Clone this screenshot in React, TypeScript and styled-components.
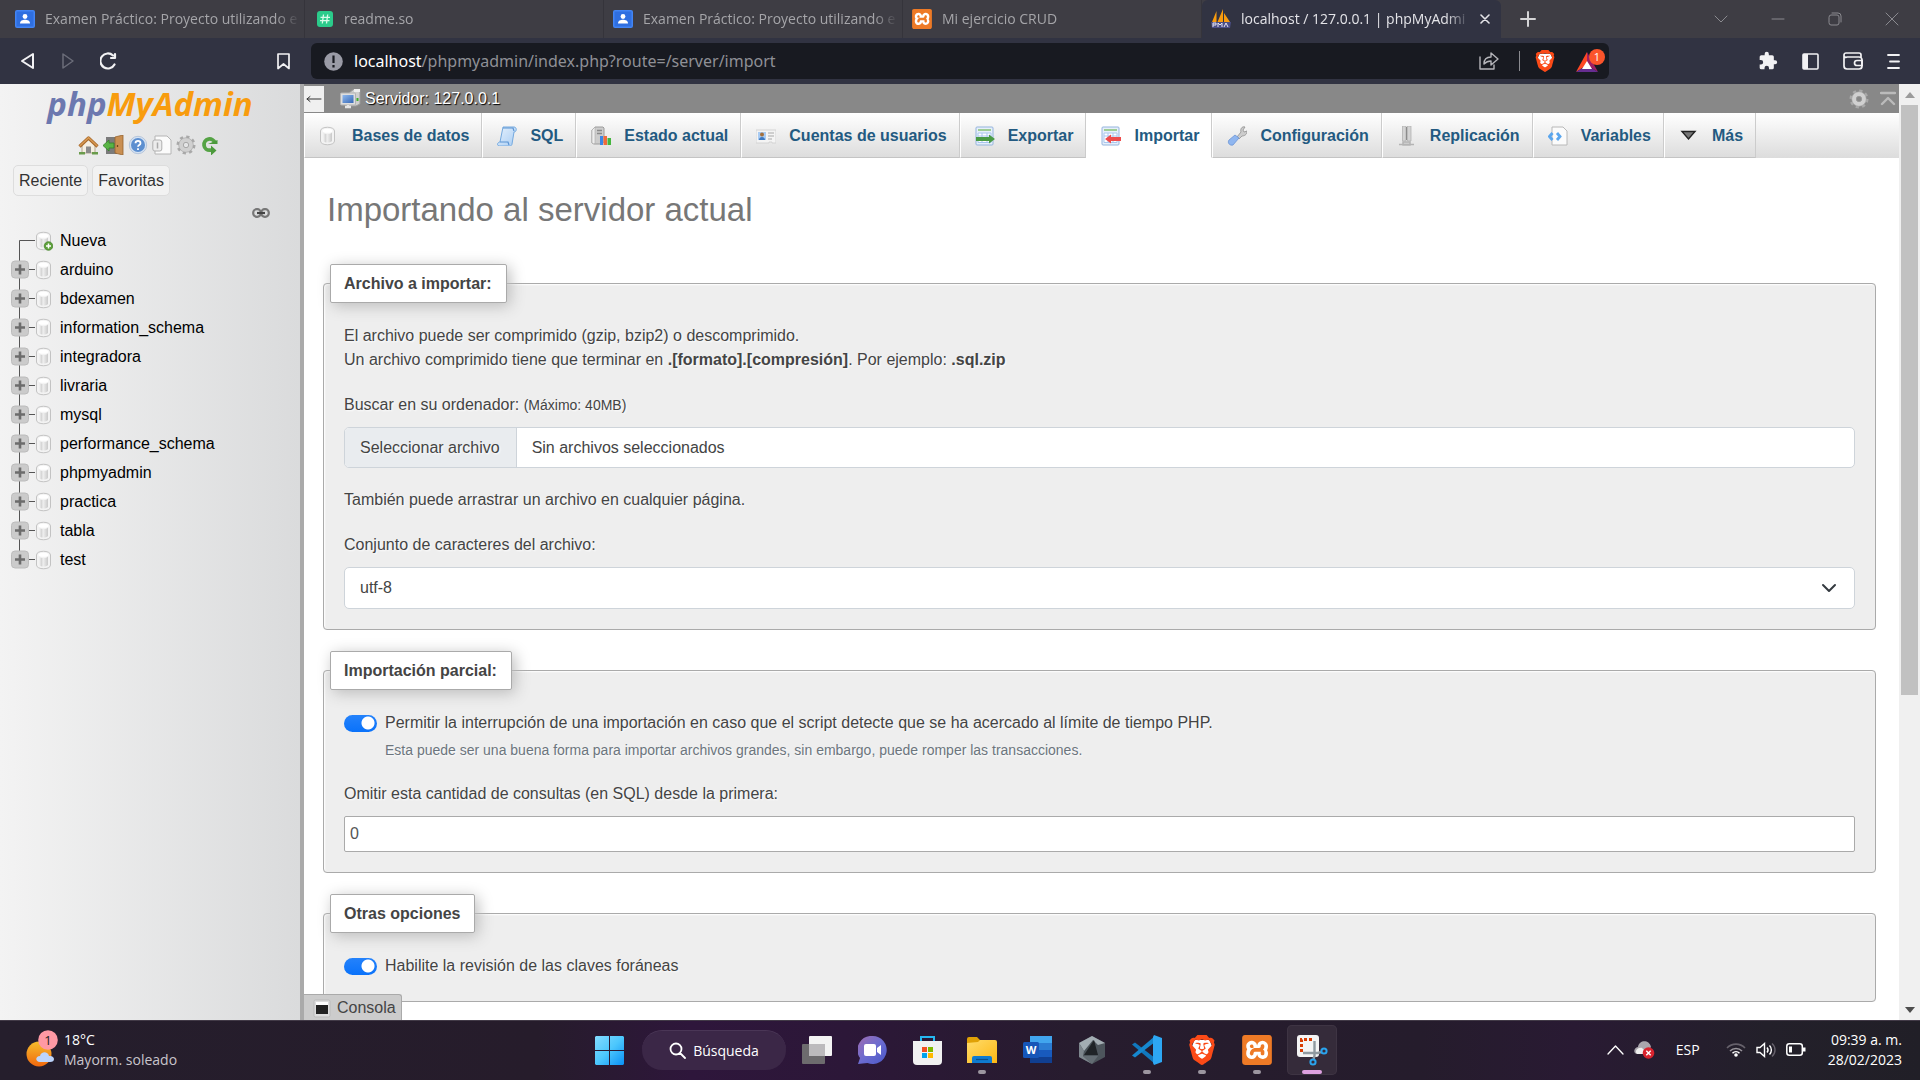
import React from "react";
import styled, { createGlobalStyle, css } from "styled-components";
import { SiBrave, SiXampp } from "react-icons/si";

const UI = `"Open Sans", "Noto Sans", sans-serif`;
const PAGE = `"Liberation Sans", Arial, sans-serif`;

const GlobalStyle = createGlobalStyle`
  *, *::before, *::after { box-sizing: border-box; }
  body { margin: 0; font-family: ${PAGE}; font-size: 16px; line-height: 24px; color: #444; background: #fff; }
  button, input, select { font: inherit; color: inherit; }
  button { margin: 0; padding: 0; border: 0; background: none; }
  a { color: inherit; text-decoration: none; }
  svg { display: block; flex: none; }
`;

const Desktop = styled.div`
  display: flex;
  flex-direction: column;
  height: 100vh;
  overflow: hidden;
`;

/* ---------- browser chrome ---------- */

const TabStrip = styled.div`
  display: flex;
  align-items: stretch;
  height: 38px;
  flex: none;
  background: #3e3d44;
  font-family: ${UI};
  font-size: 14px;
  color: #a5a5a9;
`;

const BrowserTab = styled.a<{ $active?: boolean; $first?: boolean }>`
  display: flex;
  align-items: center;
  gap: 10px;
  flex: 0 1 ${(p) => (p.$first ? 305 : 299)}px;
  min-width: 0;
  padding: 0 ${(p) => (p.$active ? 10 : 4)}px 0 ${(p) => (p.$first ? 15 : 9)}px;
  border-right: 1px solid ${(p) => (p.$active ? "transparent" : "#35343b")};
  ${(p) =>
    p.$active &&
    css`
      background: #313342;
      color: #e4e4e8;
      border-radius: 6px 6px 0 0;
      font-weight: 500;
    `}
`;

const TabTitle = styled.span`
  flex: 1;
  overflow: hidden;
  white-space: nowrap;
  mask-image: linear-gradient(90deg, #000 calc(100% - 24px), transparent);
`;

const NewTab = styled.button`
  display: grid;
  place-items: center;
  width: 54px;
`;

const WindowControls = styled.div`
  display: flex;
  align-items: center;
  gap: 43px;
  margin-left: auto;
  padding-right: 21px;
  color: #8b8b90;
`;

const AddressRow = styled.div`
  display: flex;
  align-items: center;
  height: 46px;
  flex: none;
  padding: 0 20px;
  background: #313342;
  color: #f2f2f4;
`;

const NavButtons = styled.div`
  display: flex;
  align-items: center;
  gap: 24px;
  width: 257px;
  flex: none;
`;

const AddressBar = styled.div`
  display: flex;
  align-items: center;
  gap: 11px;
  height: 36px;
  flex: 0 1 1298px;
  min-width: 0;
  margin-left: 21px;
  padding: 0 3px 0 13px;
  border-radius: 6px;
  background: #181a21;
`;

const Url = styled.div`
  flex: 1;
  min-width: 0;
  font-family: "Noto Sans", "Open Sans", sans-serif;
  font-size: 16px;
  color: #8f9096;
  white-space: nowrap;
  overflow: hidden;
  b { color: #fff; font-weight: 400; }
`;

const AddressActions = styled.div`
  display: flex;
  align-items: center;
  gap: 20px;
`;

const Divider = styled.span`
  width: 1px;
  height: 20px;
  margin-right: -5px;
  background: #8a8b90;
`;

const ToolbarActions = styled.div`
  display: flex;
  align-items: center;
  gap: 24px;
  margin-left: auto;
`;

/* ---------- phpMyAdmin ---------- */

const Page = styled.div`
  display: flex;
  flex: 1;
  min-height: 0;
`;

const Sidebar = styled.aside`
  display: flex;
  flex-direction: column;
  width: 304px;
  flex: none;
  border-right: 4px solid #aaa;
  background: linear-gradient(90deg, #f3f3f3, #dadbdc);
  color: #000;
`;

const Logo = styled.a`
  align-self: center;
  height: 44px;
  font-family: ${UI};
  font-size: 33px;
  font-style: italic;
  font-weight: 700;
  line-height: 40px;
  color: #f89c0e;
  span { color: #6c78af; }
`;

const SideIcons = styled.div`
  display: flex;
  justify-content: center;
  gap: 4px;
  height: 23px;
  margin-top: 7px;
  padding-right: 2px;
`;

const SideTabs = styled.div`
  display: flex;
  gap: 4px;
  margin-top: 7px;
  padding-left: 13px;
`;

const SideTab = styled.button`
  height: 31px;
  padding: 0 5px;
  border: 1px solid #ddd;
  border-radius: 5px;
  background: #f2f2f2;
  color: #333;
`;

const LinkRow = styled.div`
  display: flex;
  justify-content: flex-end;
  height: 31px;
  padding: 12px 30px 0 0;
`;

const Tree = styled.ul`
  margin: 0;
  padding: 0 0 0 11px;
  list-style: none;
`;

const TreeItem = styled.li`
  display: flex;
  align-items: center;
  height: 29px;
  &:first-child { height: 28px; }
`;

const TreeLink = styled.a`
  margin-left: 7px;
`;

const Main = styled.div`
  position: relative;
  display: flex;
  flex-direction: column;
  flex: 1;
  min-width: 0;
  overflow: hidden;
  background: #fff;
`;

const ServerBar = styled.div`
  display: flex;
  align-items: center;
  height: 29px;
  flex: none;
  padding-right: 3px;
  background: #888;
  color: #fff;
  text-shadow: 1px 1px 1px #000;
`;

const CollapseButton = styled.button`
  width: 20px;
  height: 26px;
  margin-right: 16px;
  background: #f0f0f0;
  color: #333;
  display: grid;
  place-items: center;
`;

const ServerLink = styled.a`
  display: flex;
  align-items: center;
  gap: 4px;
`;

const ServerTools = styled.div`
  display: flex;
  align-items: center;
  gap: 11px;
  margin-left: auto;
`;

const Menu = styled.nav`
  display: flex;
  height: 45px;
  flex: none;
  background: linear-gradient(#fff, #dcdcdc);
`;

const MenuTab = styled.a<{ $active?: boolean }>`
  display: flex;
  align-items: center;
  gap: 13px;
  padding: 1px 12px 0 14px;
  border-left: 1px solid #fff;
  border-right: 1px solid #ccc;
  border-bottom: 1px solid #c4c4c4;
  font-weight: 700;
  color: #235a81;
  white-space: nowrap;
  ${(p) =>
    p.$active &&
    css`
      background: #fff;
      border-bottom-color: #fff;
    `}
`;

const Content = styled.form`
  padding: 0 23px 0 19px;
`;

const Title = styled.h1`
  margin: 33px 0 35px 4px;
  font-size: 33px;
  font-weight: 400;
  line-height: 38px;
  color: #777;
`;

const Group = styled.fieldset`
  min-width: 0;
  margin: 0 0 21px;
  padding: 0;
  border: 1px solid #aaa;
  border-radius: 4px;
  background: #eee;
  box-shadow: 1px 1px 2px #fff inset;
  text-shadow: 1px 1px 2px #fff;
`;

const Legend = styled.legend`
  height: 39px;
  margin-left: 6px;
  padding: 0 14px 0 13px;
  border: 1px solid #aaa;
  border-radius: 2px;
  background: #fff;
  box-shadow: 3px 3px 15px #bbb;
  font-weight: 700;
  line-height: 37px;
`;

const GroupBody = styled.div`
  display: flex;
  flex-direction: column;
  padding: 21px 20px 20px;
`;

const Paragraph = styled.p`
  margin: 0 0 21px;
`;

const FieldLabel = styled.label`
  margin-bottom: 10px;
  small { font-size: 14px; }
`;

const FilePicker = styled.label`
  display: flex;
  height: 41px;
  margin-bottom: 20px;
  border: 1px solid #ced4da;
  border-radius: 5px;
  background: #fff;
  line-height: 39px;
  overflow: hidden;
  input { width: 0; height: 0; margin: 0; opacity: 0; }
`;

const FileButton = styled.span`
  padding: 0 16px 0 15px;
  border-right: 1px solid #ced4da;
  background: #e9ecef;
`;

const FileName = styled.span`
  padding: 0 15px;
`;

const SelectBox = styled.div`
  display: grid;
  align-items: center;
  > * { grid-area: 1 / 1; }
  > svg { justify-self: end; margin-right: 18px; pointer-events: none; }
`;

const Select = styled.select`
  appearance: none;
  width: 100%;
  height: 42px;
  padding: 0 15px;
  border: 1px solid #ced4da;
  border-radius: 5px;
  background: #fff;
`;

const SwitchRow = styled.div`
  display: flex;
  align-items: center;
  gap: 8px;
  height: 24px;
  &:last-child { margin-bottom: 3px; }
`;

const Switch = styled.input`
  appearance: none;
  width: 33px;
  height: 17px;
  margin: 0;
  border-radius: 9px;
  background: radial-gradient(circle at 24px 8px, #fff 6px, transparent 7px), linear-gradient(#2482fb, #0a72fa);
`;

const Hint = styled.div`
  margin: 4px 0 21px 41px;
  font-size: 14px;
  line-height: 22px;
  color: #6c757d;
`;

const NumberInput = styled.input`
  width: 100%;
  height: 36px;
  padding: 0 5px;
  border: 1px solid #aaa;
  border-radius: 2px;
  background: #fff;
  color: #555;
`;

const ConsoleTab = styled.button`
  position: absolute;
  left: 0;
  bottom: 0;
  display: flex;
  align-items: center;
  gap: 6px;
  height: 26px;
  padding: 1px 5px 0 9px;
  border: 1px solid #aaa;
  border-width: 1px 1px 0 0;
  border-radius: 0 3px 0 0;
  background: #ccc;
  color: #444;
`;

const ScrollBar = styled.div`
  display: flex;
  flex-direction: column;
  align-items: center;
  width: 21px;
  flex: none;
  background: #f0f0f0;
`;

const ScrollArrow = styled.button`
  display: grid;
  place-items: center;
  height: 21px;
`;

const ScrollTrack = styled.div`
  flex: 1;
  width: 17px;
`;

const ScrollThumb = styled.div`
  height: 66%;
  background: #c1c1c1;
`;

/* ---------- taskbar ---------- */

const TaskBar = styled.footer`
  display: grid;
  grid-template-columns: 1fr auto 1fr;
  align-items: center;
  height: 60px;
  flex: none;
  border-top: 1px solid #423a47;
  background: linear-gradient(90deg, #251e2c 0%, #261c2b 28%, #2e163b 36%, #2c1738 44%, #271c2e 56%, #251c2c 74%, #291a33 82%, #23202a 92%, #211f27 100%);
  color: #fff;
  font-family: ${UI};
  font-size: 14px;
  line-height: 20px;
`;

const Weather = styled.button`
  display: flex;
  align-items: center;
  gap: 6px;
  justify-self: start;
  padding: 0 0 2px 26px;
  text-align: left;
  span { display: block; }
  span + span { color: #c9c5cc; }
`;

const Apps = styled.div`
  display: flex;
  align-items: center;
  gap: 5px;
  padding: 0 0 1px 1px;
`;

const AppButton = styled.button<{ $active?: boolean }>`
  position: relative;
  display: grid;
  place-items: center;
  width: 50px;
  height: 50px;
  border-radius: 5px;
  ${(p) =>
    p.$active &&
    css`
      background: #352b3a;
      box-shadow: inset 0 0 0 1px #3e3443;
    `}
`;

const Running = styled.i<{ $active?: boolean }>`
  position: absolute;
  bottom: 1px;
  left: 50%;
  width: ${(p) => (p.$active ? 20 : 8)}px;
  height: 4px;
  margin-left: ${(p) => (p.$active ? -10 : -4)}px;
  border-radius: 2px;
  background: ${(p) => (p.$active ? "#dda0e0" : "#9c96a0")};
`;

const Search = styled.button`
  display: flex;
  align-items: center;
  justify-content: center;
  gap: 7px;
  width: 144px;
  height: 40px;
  margin: 0 1px 0 3px;
  border-radius: 20px;
  border-top: 1px solid #4a3656;
  background: #3b2747;
`;

const Tray = styled.div`
  display: flex;
  align-items: center;
  justify-self: end;
  gap: 10px;
  padding: 0 18px 2px 0;
`;

const Language = styled.button`
  margin: 0 16px 0 11px;
  font-size: 14px;
`;

const Clock = styled.time`
  margin-left: 12px;
  text-align: right;
`;

/* ---------- drawings ---------- */

const Classroom = () => (
  <svg width="20" height="18" viewBox="0 0 20 18">
    <rect width="20" height="18" rx="2" fill="#4285f4" />
    <rect x="1.5" y="1.5" width="17" height="15" fill="#2f6fe0" />
    <circle cx="10" cy="6.5" r="2.4" fill="#fff" />
    <path d="M5 13.500c0-3 2.500-3.800 5-3.800s5 .8 5 3.800z" fill="#fff" />
  </svg>
);

const ReadmeIcon = () => (
  <svg width="20" height="16" viewBox="-3 0 20 16">
    <rect width="16" height="16" rx="3" fill="#2bcb8b" />
    <path d="M6.500 3.500 5.300 12.500M10.700 3.500 9.500 12.500M3.500 6.300h9.500M3 9.700h9.500" stroke="#d8fbe9" strokeWidth="1.300" />
  </svg>
);

const Xampp = ({ size }: { size: number }) => (
  <svg width={size} height={size} viewBox="0 0 24 24">
    <rect x="2" y="2" width="20" height="20" fill="#fff" />
    <SiXampp size={24} color="#ee7a26" />
  </svg>
);

const PmaFavicon = () => (
  <svg width="20" height="20" viewBox="0 0 20 20">
    <path d="M5.500 2 1 13h4.500zM12 0 6.500 13H12zM13 4l6 9h-6z" fill="#f89c0e" />
    <path d="M0 13h20l-1 6H1z" fill="#4b4f86" />
    <path d="M2 18v-4h3v2H2M7 18v-4l2 2 2-2v4M13 18l2-4 2 4" fill="none" stroke="#e6e6f2" />
  </svg>
);

const line = (w: number, h: number, d: string, sw = 1.5, color = "currentColor") => (
  <svg width={w} height={h} viewBox={`0 0 ${w} ${h}`} fill="none" stroke={color} strokeWidth={sw} strokeLinecap="round" strokeLinejoin="round">
    <path d={d} />
  </svg>
);

const InfoIcon = () => (
  <svg width="19" height="19" viewBox="0 0 19 19">
    <circle cx="9.500" cy="9.500" r="9.300" fill="#9a9ba6" />
    <path d="M9.500 3.500v7.500M9.500 13v2.500" stroke="#181a21" strokeWidth="2.200" />
  </svg>
);

const BraveIcon = ({ w, h }: { w: number; h: number }) => (
  <svg width={w} height={h} viewBox="2 0 20 24">
    <path d="M6 4h12l2 5-4 9-4 3-4-3-4-9z" fill="#fff" />
    <SiBrave size={24} color="#fb4a17" />
  </svg>
);

const BatIcon = () => (
  <svg width="31" height="24" viewBox="0 0 31 24">
    <path d="M12 3 1 23 12 16z" fill="#ff4724" />
    <path d="M12 3 23 23 12 16z" fill="#9e1f63" />
    <path d="M1 23h22l-11-7z" fill="#662d91" />
    <path d="m12 12 5 8H7z" fill="#fff" />
    <circle cx="22" cy="8" r="8" fill="#fb542b" />
    <text x="22" y="12" textAnchor="middle" fontSize="11" fontFamily="Open Sans" fill="#fff">1</text>
  </svg>
);

const PuzzleIcon = () => (
  <svg width="20" height="20" viewBox="0 0 24 24" fill="currentColor">
    <path d="M20.500 11H19V7a2 2 0 0 0-2-2h-4V3.500a2.500 2.500 0 0 0-5 0V5H4a2 2 0 0 0-2 2v3.800h1.500a2.700 2.700 0 0 1 0 5.400H2V20a2 2 0 0 0 2 2h3.800v-1.500a2.700 2.700 0 0 1 5.400 0V22H17a2 2 0 0 0 2-2v-4h1.500a2.500 2.500 0 0 0 0-5z" />
  </svg>
);

const SidebarIcon = () => (
  <svg width="17" height="17" viewBox="0 0 17 17">
    <rect x="1" y="1" width="15" height="15" rx="1" fill="none" stroke="#f2f2f4" strokeWidth="1.600" />
    <path d="M1 1h5v15H1z" fill="#f2f2f4" />
  </svg>
);

const WalletIcon = () => (
  <svg width="20" height="18" viewBox="0 0 20 18" fill="none" stroke="#f2f2f4" strokeWidth="1.700">
    <path d="M1 4v10a3 3 0 0 0 3 3h12a3 3 0 0 0 3-3V8a3 3 0 0 0-3-3H4a2 2 0 0 1-3-2 2 2 0 0 1 2-2h13a2 2 0 0 1 2 2v3" />
    <path d="M19 8.500h-5a2.500 2.500 0 0 0 0 5h5z" />
  </svg>
);

const Gradients = () => (
  <svg width="0" height="0" style={{ position: "absolute" }} aria-hidden="true">
    <defs>
      <linearGradient id="silver"><stop offset="0" stopColor="#f4f4f4" /><stop offset=".3" stopColor="#d4d4d4" /><stop offset=".45" stopColor="#f0f0f0" /><stop offset="1" stopColor="#c9c9c9" /></linearGradient>
      <linearGradient id="sky" x1="0" y1="0" x2="1" y2="1"><stop offset="0" stopColor="#e6f1fd" /><stop offset="1" stopColor="#a9cdf3" /></linearGradient>
      <linearGradient id="screen" x1="0" y1="0" x2="1" y2="1"><stop offset="0" stopColor="#8fb8ee" /><stop offset="1" stopColor="#3768b5" /></linearGradient>
      <linearGradient id="win" x1="0" y1="0" x2="1" y2="1"><stop offset="0" stopColor="#84dcff" /><stop offset=".5" stopColor="#4cc7fd" /><stop offset="1" stopColor="#0a90f5" /></linearGradient>
      <linearGradient id="sun" x1="0" y1="0" x2="0" y2="1"><stop offset="0" stopColor="#f6bd2c" /><stop offset="1" stopColor="#f0680e" /></linearGradient>
      <linearGradient id="chat" x1="0" y1="0" x2="1" y2="1"><stop offset="0" stopColor="#a06cb0" /><stop offset=".5" stopColor="#6c6cd0" /><stop offset="1" stopColor="#4a58c8" /></linearGradient>
      <linearGradient id="folder" x1="0" y1="0" x2="1" y2="1"><stop offset="0" stopColor="#ffdc6b" /><stop offset="1" stopColor="#fdb713" /></linearGradient>
    </defs>
  </svg>
);

const cylinder = (
  <>
    <path d="M1.500 5c0-5 14-5 14 0v10c0 5-14 5-14 0z" fill="#f3f3f3" stroke="#c3c3c3" />
    <path d="M4 6.500c2 2 7 2 9 0V15c-2 2-7 2-9 0z" fill="url(#silver)" />
    <ellipse cx="8.500" cy="4.800" rx="5" ry="2" fill="#fff" />
  </>
);

const DbIcon = ({ plus }: { plus?: boolean }) => (
  <svg width="18" height="20" viewBox="0 0 18 20">
    {cylinder}
    {plus && (
      <>
        <circle cx="13.500" cy="15" r="4.300" fill="#5da03a" stroke="#3f7f25" strokeWidth=".7" />
        <path d="M13.500 12.500v5M11 15h5" stroke="#fff" strokeWidth="1.500" />
      </>
    )}
  </svg>
);

const Branch = ({ kind }: { kind: "first" | "node" | "last" }) => (
  <svg width="24" height="29" viewBox="0 0 24 29">
    <path d={kind === "first" ? "M8.500 29V13.500H24" : kind === "last" ? "M8.500 0V14.500H26" : "M8.500 0V29M8.500 14.500H26"} fill="none" stroke="#555" />
    {kind !== "first" && (
      <>
        <rect x=".5" y="6" width="17" height="17" rx="3.500" fill="#cbcbcb" stroke="#bcbcbc" />
        <path d="M9 9.500v10M4 14.500h10" stroke="#6c6c6c" strokeWidth="2.600" />
      </>
    )}
  </svg>
);

const Cog = () => (
  <svg width="20" height="20" viewBox="0 0 20 20">
    <circle cx="10" cy="10" r="8" fill="none" stroke="#a9a9a9" strokeWidth="3" strokeDasharray="3.140 3.140" />
    <circle cx="10" cy="10" r="5" fill="none" stroke="#d0d0d0" strokeWidth="4.500" />
    <circle cx="10" cy="10" r="7.300" fill="none" stroke="#a0a0a0" strokeWidth=".6" />
    <circle cx="10" cy="10" r="2.700" fill="none" stroke="#999" strokeWidth=".8" />
  </svg>
);

const HomeIcon = () => (
  <svg width="21" height="20" viewBox="0 0 21 20">
    <path d="M4 9.500V18h13V9.500L10.500 4z" fill="#f5efe2" stroke="#b3a68d" />
    <path d="M1.500 11.500 10.500 3l9 8.500" fill="none" stroke="#a86a2c" strokeWidth="3.200" strokeLinejoin="round" />
    <path d="M1.800 11 10.500 2.800l8.700 8.200" fill="none" stroke="#d99a52" strokeWidth="1.400" />
    <path d="M8 11.500h5V18H8z" fill="#8b8b8b" />
    <path d="M1 18.200h6M14 18.200h6" stroke="#6a9c4c" strokeWidth="2.400" />
  </svg>
);

const ExitIcon = () => (
  <svg width="21" height="20" viewBox="0 0 21 20">
    <path d="M3 2h11v17H3z" fill="#7b7b7b" />
    <path d="m12 2 8-2v20l-8-2z" fill="#c98f52" stroke="#95632f" strokeWidth=".8" />
    <path d="M14.500 10v2" stroke="#6b451c" strokeWidth="1.300" />
    <path d="m0 10.500 6-5.500v3h5v5H6v3z" fill="#58b445" stroke="#33802a" strokeWidth=".8" />
  </svg>
);

const HelpIcon = () => (
  <svg width="20" height="20" viewBox="0 0 20 20">
    <circle cx="10" cy="10" r="8.700" fill="#d5e2f2" stroke="#a9bdd6" strokeWidth=".8" />
    <circle cx="10" cy="10" r="7" fill="#5c8fd0" />
    <path d="M7.500 8.200c0-3.200 5-3.200 5 0 0 2-2.500 1.700-2.500 3.600M10 13.200V15" fill="none" stroke="#fff" strokeWidth="1.800" />
  </svg>
);

const DocIcon = () => (
  <svg width="20" height="20" viewBox="0 0 20 20">
    <path d="M3 1h12l4 4v14H3z" fill="#fbfbfb" stroke="#b5b5b5" />
    <rect x=".8" y="5" width="9" height="11" rx="2" fill="#ececec" stroke="#b0b0b0" />
    <path d="M5.500 7.500v6" stroke="#aaa" strokeWidth="1.500" />
  </svg>
);

const ReloadIcon = () => (
  <svg width="20" height="20" viewBox="0 0 20 20">
    <path d="M15 8A5.600 5.600 0 1 0 10 15.200h2" fill="none" stroke="#55a345" strokeWidth="3.800" />
    <path d="M8 9h9.500V5zM11 10.500l5.500 5-5.500 5z" fill="#4c9a3c" />
  </svg>
);

const ChainIcon = () => (
  <svg width="18" height="10" viewBox="0 0 18 10" fill="none" stroke="#777" strokeWidth="2.200">
    <rect x="1.200" y="1.200" width="7.600" height="7.600" rx="3.500" />
    <rect x="9.200" y="1.200" width="7.600" height="7.600" rx="3.500" />
    <path d="M5 5h8" stroke="#444" />
  </svg>
);

const ServerIcon = () => (
  <svg width="21" height="20" viewBox="0 0 21 20">
    <path d="m9 4 5-4h6v15l-4 2H9z" fill="#cfcfcf" stroke="#999" />
    <path d="M14 0h6v3h-6z" fill="#eee" />
    <rect x=".5" y="4" width="15" height="12" rx="1" fill="#dedede" stroke="#b2b2b2" />
    <rect x="2.500" y="6" width="11" height="8" fill="url(#screen)" />
    <path d="M5 18h6M8 16v2" stroke="#e5e5e5" strokeWidth="2.500" />
    <path d="M17.500 9v3" stroke="#3fae2c" strokeWidth="2" />
  </svg>
);

const Box20 = ({ children }: { children: React.ReactNode }) => (
  <svg width="20" height="20" viewBox="0 0 20 20">{children}</svg>
);

const SqlIcon = () => (
  <Box20>
    <path d="M6 1h11c3 0 3 5 0 5l-2 12c0 1-1 2-2 2H2c-3-1-1-4 1-4z" fill="url(#sky)" stroke="#74a9df" />
    <path d="M3 16h8l1 3M6 2h10l1 3" fill="none" stroke="#5b93d2" strokeWidth="1.200" />
  </Box20>
);

const StatusIcon = () => (
  <Box20>
    <path d="M1 4 4 1h8l1 1v14l-3 2H3l-2-1z" fill="#cdcdcd" stroke="#9c9c9c" />
    <path d="M1 4 4 1v16l-1 1-2-1z" fill="#eee" stroke="#aaa" strokeWidth=".6" />
    <path d="M6 4.500h5M6 7.500h5" stroke="#8a8a8a" strokeWidth="1.400" />
    <path d="M9 10h3v9H9z" fill="#3c85e6" />
    <path d="M12.500 10h3.500v9h-3.500z" fill="#f06a3c" />
    <path d="M16.500 12H20v7h-3.500z" fill="#45b63e" />
  </Box20>
);

const UsersIcon = () => (
  <Box20>
    <path d="M0 4h20v13h-4v-1h-3v1H0z" fill="#f4f4f4" stroke="#d4d4d4" />
    <rect x="2" y="6" width="8" height="8" fill="#a9cbf2" />
    <circle cx="6" cy="8.500" r="2" fill="#a4703c" />
    <path d="M3 14c0-4 6-4 6 0z" fill="#3d78c0" />
    <path d="M12 7h6M12 10h6M12 13h4" stroke="#a8a8a8" />
  </Box20>
);

const SheetIcon = ({ color, dir }: { color: string; dir: "in" | "out" }) => (
  <Box20>
    <rect x="1" y="1" width="17" height="18" rx="1" fill="#e6effa" stroke="#94b4dd" />
    <path d="M3 4h13" stroke="#8cc57c" strokeWidth="1.600" />
    <path d="M3 7h13v9.500H3zM3 10h13M7 7v9.500M12 7v9.500" stroke="#a9c6ee" fill="#fff" />
    <path d={dir === "out" ? "M1 11h13V8.500l6 4.500-6 4.500V15H1z" : "M20 11h-10V8.500L4 13l6 4.500V15h10z"} fill={color} />
  </Box20>
);

const WrenchIcon = () => (
  <Box20>
    <path d="m10 11 4-5c-1-3 1-6 4-5l-2 3 1 2 3-1c0 4-3 5-5 5l-3 3z" fill="#ccc" stroke="#909090" strokeWidth=".8" />
    <path d="m8 9 4 3-6 7c-3 1-6-2-4-5z" fill="#8fb6f0" stroke="#6c94d4" strokeWidth=".8" />
  </Box20>
);

const ReplicationIcon = () => (
  <Box20>
    <path d="M5.500 0h3.500v15H5.500zM10.500 0H14v15h-3.500z" fill="#d4d4d4" stroke="#acacac" strokeWidth=".7" />
    <path d="M9.500 1v13" stroke="#8c8c8c" />
    <path d="M2 18.500h15M6 16h7v3H6z" stroke="#b4b4b4" strokeWidth="1.500" fill="#d5d5d5" />
  </Box20>
);

const VariablesIcon = () => (
  <Box20>
    <path d="M4 1h11l4 4v14H4z" fill="#fbfbfb" stroke="#b8b8b8" />
    <path d="M4.500 7 1.500 10.500l3 3.500M9 7l3 3.500L9 14" fill="none" stroke="#5aa6ee" strokeWidth="2.800" />
  </Box20>
);

const TriangleIcon = () => (
  <Box20>
    <path d="M3 5.500h13l-6.500 7.500z" fill="#777" stroke="#222" strokeWidth="1.400" />
  </Box20>
);

const WeatherIcon = () => (
  <svg width="32" height="42" viewBox="0 0 32 42">
    <ellipse cx="13" cy="25" rx="12.500" ry="12.500" fill="url(#sun)" />
    <path d="M14 33c-5 0-5-6 0-6 1-5 8-5 9 0 6-1 7 6 1 6z" fill="#bcd4fb" />
    <circle cx="22" cy="11" r="9.800" fill="#ff99a4" />
    <text x="22" y="16" textAnchor="middle" fontSize="13" fontFamily="Open Sans" fill="#222">1</text>
  </svg>
);

const WindowsLogo = () => (
  <svg width="29" height="29" viewBox="0 0 29 29">
    <path d="M1 0h13v14H0V1zM15 0h13l1 1v13H15zM0 15h14v14H1l-1-1zM15 15h14v13l-1 1H15z" fill="url(#win)" />
  </svg>
);

const TaskViewIcon = () => (
  <svg width="30" height="28" viewBox="0 0 30 28">
    <rect x="7" y="0" width="23" height="20" rx="1" fill="#f3f3f3" />
    <rect x="0" y="8" width="23" height="20" rx="1" fill="#6d6b6e" />
    <path d="M7 8h16v12H7z" fill="#bcbabd" />
  </svg>
);

const ChatIcon = () => (
  <svg width="29" height="28" viewBox="0 0 29 28">
    <path d="M14.500 0a14 14 0 1 1-5 27L0 28l2-6A14 14 0 0 1 14.500 0z" fill="url(#chat)" />
    <rect x="6" y="8" width="12" height="12" rx="2" fill="#fff" />
    <path d="m19 12 4-3v10l-4-3z" fill="#fff" />
  </svg>
);

const StoreIcon = () => (
  <svg width="29" height="29" viewBox="0 0 29 29">
    <path d="M8 6V1h13v5" fill="none" stroke="#25b7f0" strokeWidth="2" />
    <path d="M0 5h29v20a4 4 0 0 1-4 4H4a4 4 0 0 1-4-4z" fill="#f1f1f1" />
    <path d="M9 11h5v5H9z" fill="#f25022" />
    <path d="M15 11h5v5h-5z" fill="#7fba00" />
    <path d="M9 17h5v5H9z" fill="#00a4ef" />
    <path d="M15 17h5v5h-5z" fill="#ffb900" />
  </svg>
);

const ExplorerIcon = () => (
  <svg width="30" height="28" viewBox="0 0 30 28">
    <path d="M0 3a2 2 0 0 1 2-2h8l3 3h10v4H0z" fill="#e0a106" />
    <path d="M0 7l11-1 2-2h15a2 2 0 0 1 2 2v21H0z" fill="url(#folder)" />
    <path d="M5 27v-5a2 2 0 0 1 2-2h16a2 2 0 0 1 2 2v5z" fill="#0f7bd0" />
    <path d="M9 23.500h12" stroke="#0a4f8c" strokeWidth="1.200" />
  </svg>
);

const WordIcon = () => (
  <svg width="29" height="28" viewBox="0 0 29 28">
    <path d="M7 0h22v7H7z" fill="#41a5ee" />
    <path d="M7 7h22v7H7z" fill="#2b7cd3" />
    <path d="M7 14h22v7H7z" fill="#185abd" />
    <path d="M7 21h22v6H7z" fill="#103f91" />
    <rect y="6" width="16" height="16" rx="1.500" fill="#1656b8" />
    <text x="8" y="18" textAnchor="middle" fontSize="11" fontWeight="700" fontFamily="Open Sans" fill="#fff">W</text>
  </svg>
);

const HexIcon = () => (
  <svg width="26" height="28" viewBox="0 0 26 28">
    <path d="M13 0 26 7v14l-13 7-13-7V7z" fill="#4d555c" />
    <path d="M13 0 26 7l-7 2-5-5-9 11-5-8z" fill="#a3adb3" />
    <path d="m0 7 5 8-1 5 9 8-13-7z" fill="#7d868d" />
    <path d="m4 20 15 0-6 8z" fill="#636c73" />
    <path d="m15 4 4 15-14 0z" fill="#1f2327" />
  </svg>
);

const VsCodeIcon = () => (
  <svg width="30" height="30" viewBox="0 0 30 30">
    <path d="M0 9.500 3 7.500 23 23v6z" fill="#1178bd" />
    <path d="M0 20.500 3 22.500 23 7V1z" fill="#1688cf" />
    <path d="m22 0 8 3v24l-8 3-1-2V2z" fill="#2da7f3" />
  </svg>
);

const SnipIcon = () => (
  <svg width="31" height="31" viewBox="0 0 31 31">
    <rect width="22" height="22" rx="3" fill="#f4f4f4" />
    <path d="M4.500 17V4.500H17" fill="none" stroke="#d83b01" strokeWidth="3" strokeDasharray="3 2" />
    <path d="M6 18h15l3-1M17.500 6v15l-1 3" fill="none" stroke="#8f999f" strokeWidth="2.400" />
    <circle cx="27" cy="16" r="2.600" fill="none" stroke="#2aa4ee" strokeWidth="2" />
    <circle cx="16" cy="27" r="2.600" fill="none" stroke="#2aa4ee" strokeWidth="2" />
  </svg>
);

const CloudIcon = () => (
  <svg width="21" height="18" viewBox="0 0 21 18">
    <path d="M4 13c-5 0-5-6 0-7 1-7 11-8 13 0l-5 7z" fill="#aaa6ad" />
    <path d="M3 13c-3-3 1-7 5-6l6 6z" fill="#efefef" />
    <circle cx="14.500" cy="12" r="5.800" fill="#d9232e" />
    <path d="m12.300 9.800 4.400 4.400M16.700 9.800l-4.400 4.400" stroke="#fff" strokeWidth="1.400" />
  </svg>
);

const WifiIcon = () => (
  <svg width="20" height="15" viewBox="0 0 20 15" fill="none" strokeWidth="1.600">
    <path d="M1 6a12.500 12.500 0 0 1 18 0" stroke="#66616b" />
    <path d="M4 9a8.500 8.500 0 0 1 12 0" stroke="#99959c" />
    <path d="M6.500 11.200a5 5 0 0 1 7 0" stroke="#fff" />
    <circle cx="10" cy="13" r="1.800" fill="#fff" />
  </svg>
);

const SpeakerIcon = () => (
  <svg width="20" height="16" viewBox="0 0 20 16" fill="none" stroke="#fff" strokeWidth="1.400">
    <path d="M1 5.500h3L8.500 1.500v13L4 10.500H1z" />
    <path d="M11 5.500c1.300 1.500 1.300 3.500 0 5M13.500 3.500c2.500 2.500 2.500 6.500 0 9" />
    <path d="M16 1.500c4 3.500 4 9.500 0 13" stroke="#66616b" />
  </svg>
);

const BatteryIcon = () => (
  <svg width="20" height="13" viewBox="0 0 20 13">
    <rect x=".8" y=".8" width="15.500" height="11.400" rx="2.500" fill="none" stroke="#fff" strokeWidth="1.500" />
    <path d="M3 3.500h3v6H3zM17 4.500h2.500v4H17z" fill="#fff" />
  </svg>
);

const MENU = [
  { label: "Bases de datos", icon: <Box20>{cylinder}</Box20> },
  { label: "SQL", icon: <SqlIcon /> },
  { label: "Estado actual", icon: <StatusIcon /> },
  { label: "Cuentas de usuarios", icon: <UsersIcon /> },
  { label: "Exportar", icon: <SheetIcon color="#4a9b45" dir="out" /> },
  { label: "Importar", icon: <SheetIcon color="#ee4b4b" dir="in" />, active: true },
  { label: "Configuración", icon: <WrenchIcon /> },
  { label: "Replicación", icon: <ReplicationIcon /> },
  { label: "Variables", icon: <VariablesIcon /> },
  { label: "Más", icon: <TriangleIcon /> },
];

const DATABASES = ["arduino", "bdexamen", "information_schema", "integradora", "livraria", "mysql", "performance_schema", "phpmyadmin", "practica", "tabla", "test"];

const APPS = [
  { name: "Vista de tareas", icon: <TaskViewIcon /> },
  { name: "Chat", icon: <ChatIcon /> },
  { name: "Store", icon: <StoreIcon /> },
  { name: "Explorador", icon: <ExplorerIcon />, running: true },
  { name: "Word", icon: <WordIcon /> },
  { name: "Editor", icon: <HexIcon /> },
  { name: "Code", icon: <VsCodeIcon />, running: true },
  { name: "Brave", icon: <BraveIcon w={26} h={30} />, running: true },
  { name: "XAMPP", icon: <Xampp size={30} />, running: true },
  { name: "Recortes", icon: <SnipIcon />, running: true, active: true },
];

export default function App() {
  return (
    <Desktop>
      <GlobalStyle />
      <Gradients />
      <TabStrip>
        <BrowserTab href="#" $first><Classroom /><TabTitle>Examen Práctico: Proyecto utilizando e</TabTitle></BrowserTab>
        <BrowserTab href="#"><ReadmeIcon /><TabTitle>readme.so</TabTitle></BrowserTab>
        <BrowserTab href="#"><Classroom /><TabTitle>Examen Práctico: Proyecto utilizando e</TabTitle></BrowserTab>
        <BrowserTab href="#"><Xampp size={20} /><TabTitle>Mi ejercicio CRUD</TabTitle></BrowserTab>
        <BrowserTab href="#" $active>
          <PmaFavicon />
          <TabTitle>localhost / 127.0.0.1 | phpMyAdmi</TabTitle>
          {line(10, 10, "M1 1l8 8M9 1L1 9", 1.6)}
        </BrowserTab>
        <NewTab aria-label="Nueva pestaña">{line(16, 16, "M8 1v14M1 8h14", 2, "#d4d4d6")}</NewTab>
        <WindowControls>
          {line(14, 8, "M1 1l6 6 6-6", 1)}
          {line(14, 2, "M1 1h12", 1)}
          {line(14, 14, "M1 5a2 2 0 0 1 2-2h6a2 2 0 0 1 2 2v6a2 2 0 0 1-2 2H3a2 2 0 0 1-2-2zM4 1h6a3 3 0 0 1 3 3v6", 1)}
          {line(14, 14, "M1 1l12 12M13 1L1 13", 1)}
        </WindowControls>
      </TabStrip>

      <AddressRow>
        <NavButtons>
          <button aria-label="Atrás">{line(16, 18, "M13 2v14L2 9z", 2)}</button>
          <button aria-label="Adelante">{line(16, 18, "M3 2v14L13 9z", 1.5, "#6b6d79")}</button>
          <button aria-label="Recargar">{line(18, 18, "M14.500 12.500A7.500 7.500 0 1 1 13 3.500M15 2v4h-4", 2.2)}</button>
        </NavButtons>
        <button aria-label="Marcador">{line(13, 17, "M1 1h11v14.500L6.500 11 1 15.500z", 1.7)}</button>
        <AddressBar>
          <InfoIcon />
          <Url><b>localhost</b>/phpmyadmin/index.php?route=/server/import</Url>
          <AddressActions>
            {line(20, 18, "M1 5v12h14v-4M5 12c0-5 3-7 7-7V1l7 6-7 6V9c-3 0-5 1-7 3z", 1.4, "#b5b5ba")}
            <Divider />
            <BraveIcon w={20} h={22} />
            <BatIcon />
          </AddressActions>
        </AddressBar>
        <ToolbarActions>
          <PuzzleIcon />
          <SidebarIcon />
          <WalletIcon />
          {line(13, 17, "M1 2h11M3 8.500h9M1 15h11", 1.8)}
        </ToolbarActions>
      </AddressRow>

      <Page>
        <Sidebar>
          <Logo href="#"><span>php</span>MyAdmin</Logo>
          <SideIcons>
            <HomeIcon /><ExitIcon /><HelpIcon /><DocIcon /><Cog /><ReloadIcon />
          </SideIcons>
          <SideTabs>
            <SideTab>Reciente</SideTab>
            <SideTab>Favoritas</SideTab>
          </SideTabs>
          <LinkRow><ChainIcon /></LinkRow>
          <Tree>
            <TreeItem><Branch kind="first" /><DbIcon plus /><TreeLink href="#">Nueva</TreeLink></TreeItem>
            {DATABASES.map((name, i) => (
              <TreeItem key={name}>
                <Branch kind={i === DATABASES.length - 1 ? "last" : "node"} />
                <DbIcon />
                <TreeLink href="#">{name}</TreeLink>
              </TreeItem>
            ))}
          </Tree>
        </Sidebar>

        <Main>
          <ServerBar>
            <CollapseButton aria-label="Ocultar panel">{line(16, 10, "M1 5h14M4 2.500 1 5l3 2.500", 1)}</CollapseButton>
            <ServerLink href="#"><ServerIcon />Servidor: 127.0.0.1</ServerLink>
            <ServerTools>
              <Cog />
              {line(16, 16, "M1 2h14M2 13l6-6 6 6", 2.4, "#bbb")}
            </ServerTools>
          </ServerBar>
          <Menu>
            {MENU.map((m) => (
              <MenuTab key={m.label} href="#" $active={m.active}>{m.icon}{m.label}</MenuTab>
            ))}
          </Menu>
          <Content>
            <Title>Importando al servidor actual</Title>

            <Group>
              <Legend>Archivo a importar:</Legend>
              <GroupBody>
                <Paragraph>
                  El archivo puede ser comprimido (gzip, bzip2) o descomprimido.<br />
                  Un archivo comprimido tiene que terminar en <b>.[formato].[compresión]</b>. Por ejemplo: <b>.sql.zip</b>
                </Paragraph>
                <FieldLabel htmlFor="file">Buscar en su ordenador: <small>(Máximo: 40MB)</small></FieldLabel>
                <FilePicker>
                  <FileButton>Seleccionar archivo</FileButton>
                  <FileName>Sin archivos seleccionados</FileName>
                  <input id="file" type="file" />
                </FilePicker>
                <Paragraph>También puede arrastrar un archivo en cualquier página.</Paragraph>
                <FieldLabel htmlFor="charset">Conjunto de caracteres del archivo:</FieldLabel>
                <SelectBox>
                  <Select id="charset"><option>utf-8</option></Select>
                  {line(16, 10, "M2 2l6 6 6-6", 2, "#343a40")}
                </SelectBox>
              </GroupBody>
            </Group>

            <Group>
              <Legend>Importación parcial:</Legend>
              <GroupBody>
                <SwitchRow>
                  <Switch id="interrupt" type="checkbox" defaultChecked />
                  <label htmlFor="interrupt">Permitir la interrupción de una importación en caso que el script detecte que se ha acercado al límite de tiempo PHP.</label>
                </SwitchRow>
                <Hint>Esta puede ser una buena forma para importar archivos grandes, sin embargo, puede romper las transacciones.</Hint>
                <FieldLabel htmlFor="skip">Omitir esta cantidad de consultas (en SQL) desde la primera:</FieldLabel>
                <NumberInput id="skip" type="text" inputMode="numeric" defaultValue="0" />
              </GroupBody>
            </Group>

            <Group>
              <Legend>Otras opciones</Legend>
              <GroupBody>
                <SwitchRow>
                  <Switch id="fk" type="checkbox" defaultChecked />
                  <label htmlFor="fk">Habilite la revisión de las claves foráneas</label>
                </SwitchRow>
              </GroupBody>
            </Group>
          </Content>
          <ConsoleTab>
            <svg width="18" height="19" viewBox="0 0 18 19">
              <rect x="1" y="1" width="16" height="17" rx="1.500" fill="#ddd" stroke="#bbb" />
              <path d="M3 3h12v3H3z" fill="#fff" />
              <path d="M3 6h12v9H3z" fill="#222" />
            </svg>
            Consola
          </ConsoleTab>
        </Main>
        <ScrollBar>
          <ScrollArrow aria-label="Subir"><svg width="10" height="6"><path d="M0 6 5 0l5 6z" fill="#9b9b9b" /></svg></ScrollArrow>
          <ScrollTrack><ScrollThumb /></ScrollTrack>
          <ScrollArrow aria-label="Bajar"><svg width="10" height="6"><path d="M0 0h10L5 6z" fill="#4e4e4e" /></svg></ScrollArrow>
        </ScrollBar>
      </Page>

      <TaskBar>
        <Weather>
          <WeatherIcon />
          <div><span>18°C</span><span>Mayorm. soleado</span></div>
        </Weather>
        <Apps>
          <AppButton aria-label="Inicio"><WindowsLogo /></AppButton>
          <Search>{line(17, 17, "M11 11l5 5M12.500 7a5.500 5.500 0 1 1-11 0 5.500 5.500 0 0 1 11 0z", 1.8)}Búsqueda</Search>
          {APPS.map((a) => (
            <AppButton key={a.name} aria-label={a.name} $active={a.active}>
              {a.icon}
              {a.running && <Running $active={a.active} />}
            </AppButton>
          ))}
        </Apps>
        <Tray>
          {line(17, 10, "M1 9l7.500-8L16 9", 1.3)}
          <CloudIcon />
          <Language>ESP</Language>
          <WifiIcon />
          <SpeakerIcon />
          <BatteryIcon />
          <Clock>09:39 a. m.<br />28/02/2023</Clock>
        </Tray>
      </TaskBar>
    </Desktop>
  );
}
